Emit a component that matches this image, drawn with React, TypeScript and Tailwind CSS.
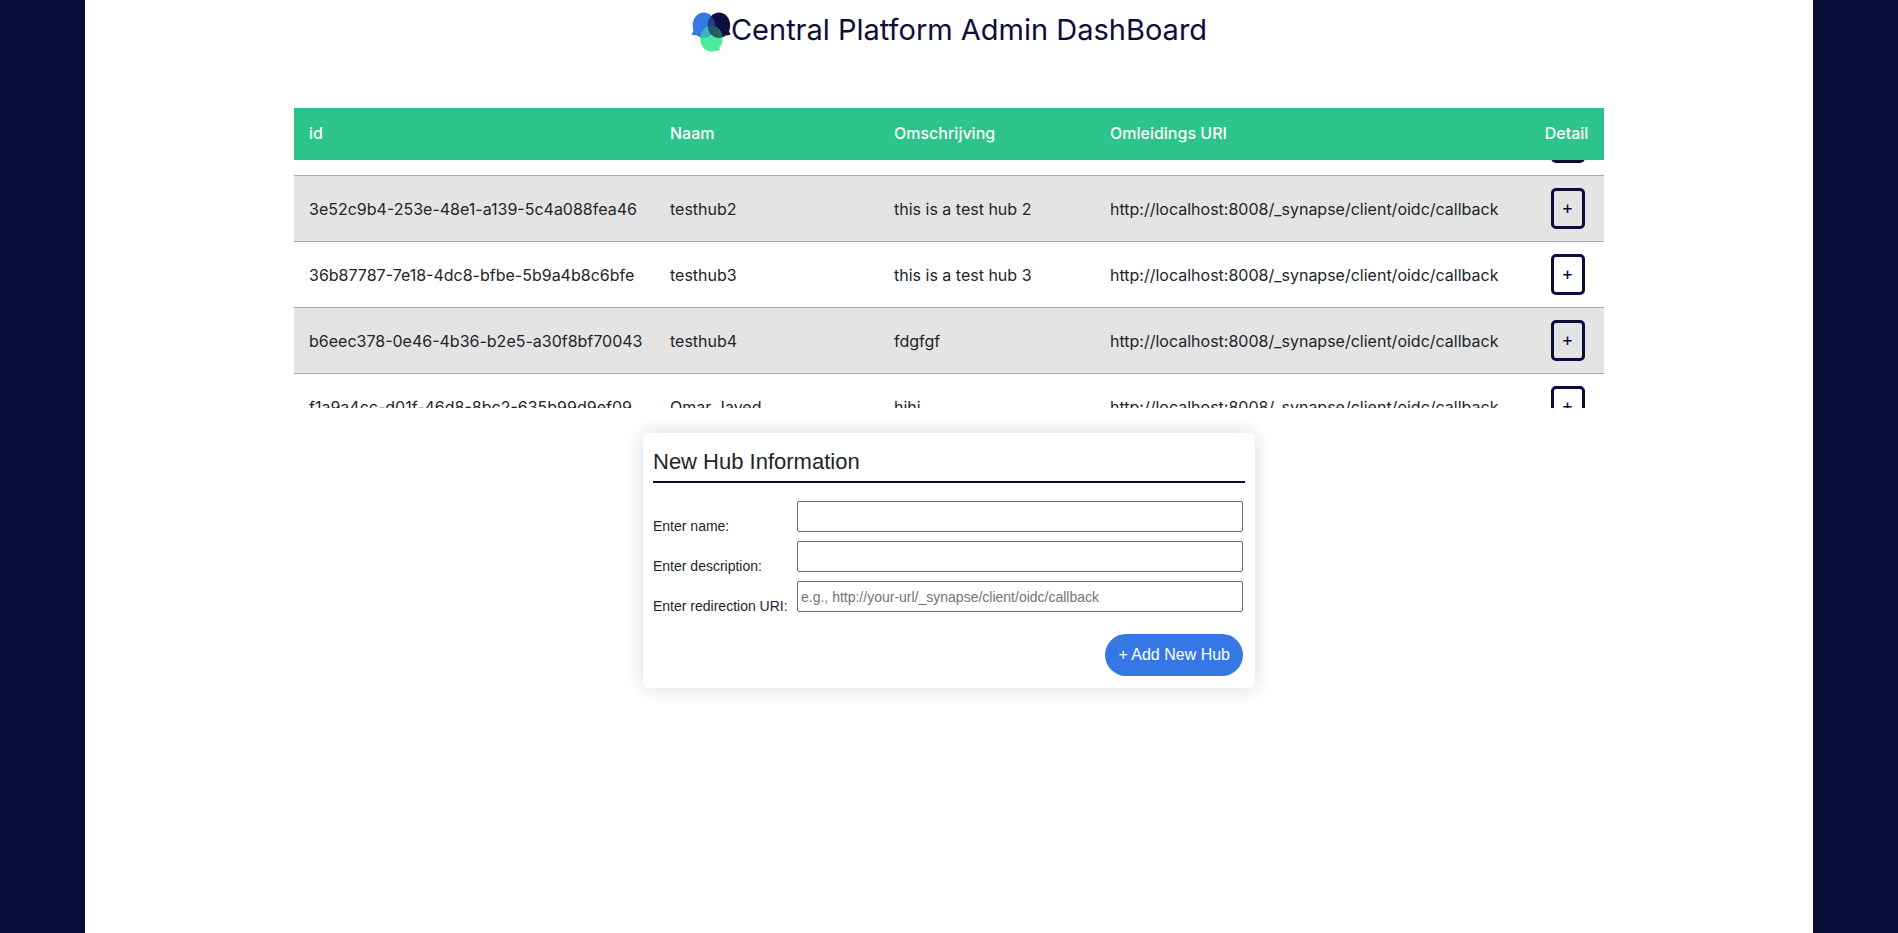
import { useLayoutEffect, useRef } from 'react';

type Hub = { id: string; name: string; description: string; uri: string };

const CALLBACK = 'http://localhost:8008/_synapse/client/oidc/callback';

const hubs: Hub[] = [
  { id: '7c1d40ae-9b52-4f0e-8a6d-2f4b71c9e035', name: 'testhub1', description: 'this is a test hub 1', uri: CALLBACK },
  { id: '3e52c9b4-253e-48e1-a139-5c4a088fea46', name: 'testhub2', description: 'this is a test hub 2', uri: CALLBACK },
  { id: '36b87787-7e18-4dc8-bfbe-5b9a4b8c6bfe', name: 'testhub3', description: 'this is a test hub 3', uri: CALLBACK },
  { id: 'b6eec378-0e46-4b36-b2e5-a30f8bf70043', name: 'testhub4', description: 'fdgfgf', uri: CALLBACK },
  { id: 'f1a9a4cc-d01f-46d8-8bc2-635b99d9ef09', name: 'Omar Javed', description: 'hihi', uri: CALLBACK },
];

function Logo() {
  return (
    <svg className="h-10 w-10 shrink-0" viewBox="0 0 40 40" aria-hidden="true">
      <defs>
        <clipPath id="left-bubble">
          <ellipse cx="12.8" cy="13.3" rx="11.1" ry="12.8" />
        </clipPath>
        <clipPath id="right-bubble">
          <ellipse cx="28" cy="13.3" rx="11.1" ry="12.8" />
        </clipPath>
      </defs>
      <path d="M2.6 17Q2.8 20.500 0.3 22.300Q3 23.800 7 23L8 17Z" fill="#357ae3" />
      <ellipse cx="12.8" cy="13.3" rx="11.1" ry="12.8" fill="#357ae3" />
      <path d="M38 17Q37.600 20.500 39.800 22.600Q37 24 33 23L32 17Z" fill="#0d0e3d" />
      <ellipse cx="28" cy="13.3" rx="11.1" ry="12.8" fill="#0d0e3d" />
      <path d="M27 34Q27.500 36.800 29.800 38.200Q26.500 39 23 38.500L21 34Z" fill="#4bea97" />
      <ellipse cx="20.4" cy="26.7" rx="11.1" ry="12.8" fill="#4bea97" />
      <g clipPath="url(#left-bubble)">
        <ellipse cx="20.4" cy="26.7" rx="11.1" ry="12.8" fill="#3eb2bb" />
      </g>
      <g clipPath="url(#right-bubble)">
        <ellipse cx="20.4" cy="26.7" rx="11.1" ry="12.8" fill="#265f60" />
      </g>
      <g clipPath="url(#left-bubble)">
        <ellipse cx="28" cy="13.3" rx="11.1" ry="12.8" fill="#213f80" />
        <g clipPath="url(#right-bubble)">
          <ellipse cx="20.4" cy="26.7" rx="11.1" ry="12.8" fill="#27566f" />
        </g>
      </g>
    </svg>
  );
}

function HubTable() {
  const scroller = useRef<HTMLDivElement>(null);

  useLayoutEffect(() => {
    if (scroller.current) scroller.current.scrollTop = 50;
  }, []);

  return (
    <div ref={scroller} className="h-[300px] overflow-y-auto [scrollbar-width:none]">
      <table className="w-full table-fixed border-separate border-spacing-0 text-left text-base">
        <colgroup>
          <col className="w-[361px]" />
          <col className="w-[224px]" />
          <col className="w-[216px]" />
          <col />
          <col className="w-[75px]" />
        </colgroup>
        <thead>
          <tr className="h-[52px] text-white">
            <th className="sticky top-0 z-10 bg-[#2bc48a] px-[15px] pb-[2px] font-medium">id</th>
            <th className="sticky top-0 z-10 bg-[#2bc48a] px-[15px] pb-[2px] font-medium">Naam</th>
            <th className="sticky top-0 z-10 bg-[#2bc48a] px-[15px] pb-[2px] font-medium">Omschrijving</th>
            <th className="sticky top-0 z-10 bg-[#2bc48a] px-[15px] pb-[2px] font-medium">Omleidings URI</th>
            <th className="sticky top-0 z-10 bg-[#2bc48a] pb-[2px] text-center font-medium">Detail</th>
          </tr>
        </thead>
        <tbody>
          {hubs.map((hub) => (
            <tr key={hub.id} className="h-[66px] whitespace-nowrap even:bg-[#e4e4e4]">
              <td className="border-b border-[#a9a9a9] px-[15px]">{hub.id}</td>
              <td className="border-b border-[#a9a9a9] px-[15px]">{hub.name}</td>
              <td className="border-b border-[#a9a9a9] px-[15px]">{hub.description}</td>
              <td className="border-b border-[#a9a9a9] px-[15px]">{hub.uri}</td>
              <td className="border-b border-[#a9a9a9] pl-[2px] text-center">
                <button
                  type="button"
                  aria-label={`Detail ${hub.name}`}
                  className="h-[41px] w-[34px] rounded-[5px] border-[3px] border-[#0c0d3b] pb-[2px] align-middle text-lg leading-none text-[#0c0d3b]"
                >
                  +
                </button>
              </td>
            </tr>
          ))}
        </tbody>
      </table>
    </div>
  );
}

const fields = [
  { id: 'hub-name', label: 'Enter name:', placeholder: '' },
  { id: 'hub-description', label: 'Enter description:', placeholder: '' },
  { id: 'hub-uri', label: 'Enter redirection URI:', placeholder: 'e.g., http://your-url/_synapse/client/oidc/callback' },
];

function NewHubForm() {
  return (
    <form
      onSubmit={(event) => event.preventDefault()}
      className="mx-auto mt-[25px] w-[612px] max-w-full rounded-[5px] bg-white p-[10px] font-['Liberation_Sans',Arial,sans-serif] text-sm shadow-[0_0_20px_rgba(0,0,0,0.15)]"
    >
      <h2 className="h-10 border-b-2 border-[#0c0d3b] pt-[5px] text-[22px] leading-[28px]">New Hub Information</h2>
      <div className="mt-[18px] grid grid-cols-[144px_1fr] gap-y-[9px] pr-[2px]">
        {fields.map((field) => (
          <div key={field.id} className="contents">
            <label htmlFor={field.id} className="self-end whitespace-nowrap leading-[12px]">
              {field.label}
            </label>
            <input
              id={field.id}
              type="text"
              placeholder={field.placeholder}
              className="h-[31px] w-full rounded-[2px] border border-[#6b6b6b] px-[3px] placeholder:text-[#757575]"
            />
          </div>
        ))}
      </div>
      <div className="mt-[22px] flex justify-end pr-[2px]">
        <button type="submit" className="mb-[2px] h-[42px] rounded-full bg-[#3578e5] px-[13px] text-base text-white">
          + Add New Hub
        </button>
      </div>
    </form>
  );
}

export default function App() {
  return (
    <div className="min-h-screen bg-[#0c0d3b] px-[85px] font-['Inter',sans-serif] text-[#212529]">
      <main className="min-h-screen bg-white px-[209px] pb-8">
        <header className="flex h-[108px] items-start justify-center pt-3">
          <Logo />
          <h1 className="text-[29px] leading-[36px] text-[#0c0d3b]">Central Platform Admin DashBoard</h1>
        </header>
        <HubTable />
        <NewHubForm />
      </main>
    </div>
  );
}
